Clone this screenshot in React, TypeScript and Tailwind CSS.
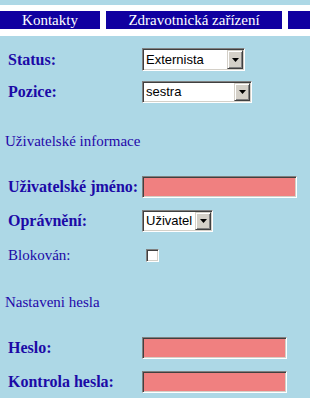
import React from "react";

const serif = "font-['Liberation_Serif','Times_New_Roman',serif]";
const sans = "font-['Liberation_Sans',Arial,sans-serif]";

function Select({ w, h, value }: { w: string; h: string; value: string }) {
  return (
    <div
      className={`${w} ${h} shrink-0 flex border border-t-[#808080] border-l-[#808080] border-b-white border-r-white bg-white shadow-[inset_1px_1px_0_#404040,inset_-1px_-1px_0_#d4d0c8] p-[1px]`}
    >
      <div className={`flex-1 flex items-center pl-[2px] text-[13px] text-black ${sans} overflow-hidden whitespace-nowrap`}>
        {value}
      </div>
      <div className="w-[16px] flex items-center justify-center bg-[#d4d0c8] border border-t-[#d4d0c8] border-l-[#d4d0c8] border-b-[#404040] border-r-[#404040] shadow-[inset_1px_1px_0_#fff,inset_-1px_-1px_0_#808080]">
        <svg width="7" height="4" viewBox="0 0 7 4">
          <path d="M0 0H7L3.5 4Z" fill="#000" />
        </svg>
      </div>
    </div>
  );
}

function TextInput({ w }: { w: string }) {
  return (
    <div
      className={`${w} h-[22px] shrink-0 border border-t-[#808080] border-l-[#808080] border-b-white border-r-white bg-[#f08080] shadow-[inset_1px_1px_0_#404040,inset_-1px_-1px_0_#d4d0c8]`}
    />
  );
}

function Label({ children, bold = true }: { children: React.ReactNode; bold?: boolean }) {
  return (
    <div
      className={`w-[142px] shrink-0 pl-[8px] text-[#1c0aa6] ${serif} ${bold ? "font-bold text-[16px]" : "font-normal text-[15px]"} whitespace-nowrap`}
    >
      {children}
    </div>
  );
}

function Heading({ children }: { children: React.ReactNode }) {
  return (
    <div className={`h-[18px] leading-[18px] pl-[5px] text-[15px] text-[#2408aa] ${serif} whitespace-nowrap`}>
      {children}
    </div>
  );
}

export default function App() {
  return (
    <div className="w-[310px] h-[398px] bg-[#add8e6] overflow-hidden">
      <div className="h-[5px]" />
      <div className="bg-white pt-[6px] pb-[7px]">
        <div className={`flex gap-[6px] h-[18px] text-[15px] text-white ${serif}`}>
          <div className="w-[100px] bg-[#1000a0] flex items-center justify-center leading-none">Kontakty</div>
          <div className="w-[176px] bg-[#1000a0] flex items-center justify-center leading-none whitespace-nowrap">
            Zdravotnická zařízení
          </div>
          <div className="flex-1 bg-[#1000a0]" />
        </div>
      </div>

      <div className="flex items-center h-[23px] mt-[12px]">
        <Label>Status:</Label>
        <Select w="w-[103px]" h="h-[23px]" value="Externista" />
      </div>
      <div className="flex items-center h-[22px] mt-[10px]">
        <Label>Pozice:</Label>
        <Select w="w-[110px]" h="h-[22px]" value="sestra" />
      </div>

      <div className="mt-[29px]">
        <Heading>Uživatelské informace</Heading>
      </div>

      <div className="flex items-center h-[22px] mt-[26px]">
        <Label>Uživatelské jméno:</Label>
        <TextInput w="w-[155px]" />
      </div>
      <div className="flex items-center h-[22px] mt-[12px]">
        <Label>Oprávnění:</Label>
        <Select w="w-[71px]" h="h-[22px]" value="Uživatel" />
      </div>
      <div className="flex items-center h-[23px] mt-[12px]">
        <Label bold={false}>Blokován:</Label>
        <div className="ml-[4px] w-[13px] h-[13px] bg-white border border-t-[#808080] border-l-[#808080] border-b-white border-r-white shadow-[inset_1px_1px_0_#404040,inset_-1px_-1px_0_#d4d0c8]" />
      </div>

      <div className="mt-[26px]">
        <Heading>Nastaveni hesla</Heading>
      </div>

      <div className="flex items-center h-[22px] mt-[26px]">
        <Label>Heslo:</Label>
        <TextInput w="w-[145px]" />
      </div>
      <div className="flex items-center h-[22px] mt-[12px]">
        <Label>Kontrola hesla:</Label>
        <TextInput w="w-[145px]" />
      </div>
    </div>
  );
}
